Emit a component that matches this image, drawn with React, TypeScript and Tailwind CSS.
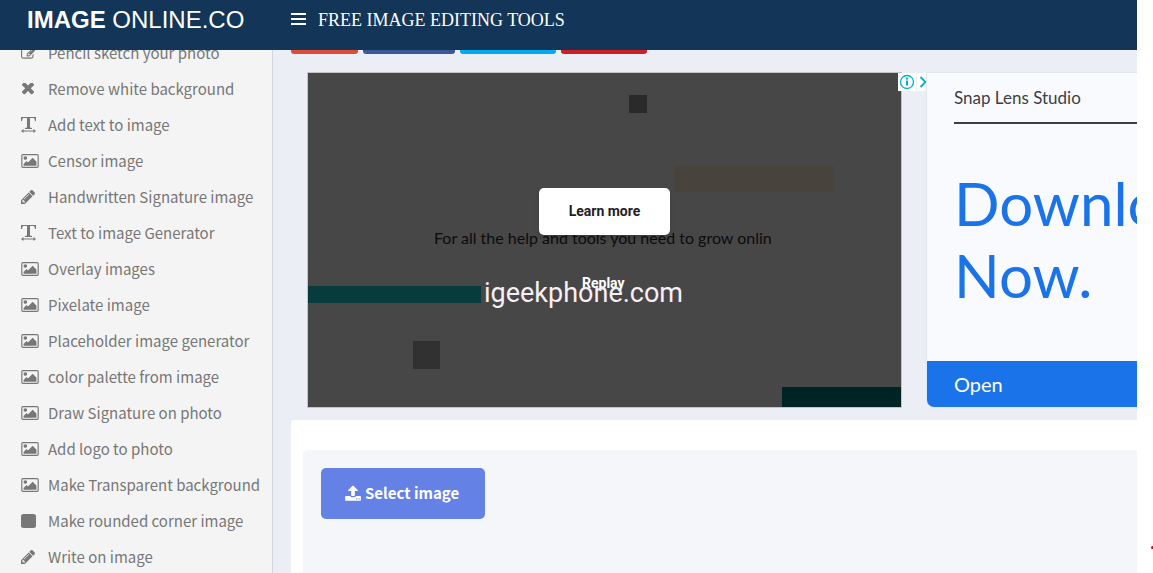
import type { ReactNode } from "react";

type IconName = "edit" | "times" | "text" | "picture" | "pencil" | "square";

const tools: { label: string; icon: IconName }[] = [
  { label: "Pencil sketch your photo", icon: "edit" },
  { label: "Remove white background", icon: "times" },
  { label: "Add text to image", icon: "text" },
  { label: "Censor image", icon: "picture" },
  { label: "Handwritten Signature image", icon: "pencil" },
  { label: "Text to image Generator", icon: "text" },
  { label: "Overlay images", icon: "picture" },
  { label: "Pixelate image", icon: "picture" },
  { label: "Placeholder image generator", icon: "picture" },
  { label: "color palette from image", icon: "picture" },
  { label: "Draw Signature on photo", icon: "picture" },
  { label: "Add logo to photo", icon: "picture" },
  { label: "Make Transparent background", icon: "picture" },
  { label: "Make rounded corner image", icon: "square" },
  { label: "Write on image", icon: "pencil" },
];

const icons: Record<IconName, ReactNode> = {
  edit: (
    <svg viewBox="0 0 1792 1792" className="h-4 w-4" fill="currentColor">
      <path d="M888 1184l116-116-152-152-116 116v56h96v96h56zm440-720q-16-16-33 1l-350 350q-17 17-1 33t33-1l350-350q17-17 1-33zm80 594v190q0 119-84.5 203.5t-203.5 84.5h-832q-119 0-203.5-84.5t-84.5-203.5v-832q0-119 84.5-203.5t203.5-84.5h832q63 0 117 25 15 7 18 23 3 17-9 29l-49 49q-14 14-32 8-23-6-45-6h-832q-66 0-113 47t-47 113v832q0 66 47 113t113 47h832q66 0 113-47t47-113v-126q0-13 9-22l64-64q15-15 35-7t20 29zm-96-738l288 288-672 672h-288v-288zm444 132l-92 92-288-288 92-92q28-28 68-28t68 28l152 152q28 28 28 68t-28 68z" />
    </svg>
  ),
  times: (
    <svg viewBox="203 430 1287 1188" className="h-3 w-[13px]" fill="currentColor">
      <path d="M1490 1322q0 40-28 68l-136 136q-28 28-68 28t-68-28l-294-294-294 294q-28 28-68 28t-68-28l-136-136q-28-28-28-68t28-68l294-294-294-294q-28-28-28-68t28-68l136-136q28-28 68-28t68 28l294 294 294-294q28-28 68-28t68 28l136 136q28 28 28 68t-28 68l-294 294 294 294q28 28 28 68z" />
    </svg>
  ),
  text: (
    <svg viewBox="0 0 16 16" className="h-4 w-4" fill="currentColor">
      <path d="M0 0h15v4h-1l-.6-2.6-.6-.4H9v9.6l2 .5v.9H4v-.9l2-.5V1H2.2l-.6.4L1 4H0zM2.5 12v1.5h10V12l2.5 2-2.5 2v-1.5h-10V16L0 14z" />
    </svg>
  ),
  picture: (
    <svg viewBox="-64 128 1920 1536" className="h-[14px] w-[18px]" fill="currentColor">
      <path d="M576 576q0 80-56 136t-136 56-136-56-56-136 56-136 136-56 136 56 56 136zm1024 384v448h-1408v-192l320-320 160 160 512-512zm96-704h-1600q-13 0-22.5 9.5t-9.5 22.5v1216q0 13 9.5 22.5t22.5 9.5h1600q13 0 22.5-9.5t9.5-22.5v-1216q0-13-9.5-22.5t-22.5-9.5zm160 32v1216q0 66-47 113t-113 47h-1600q-66 0-113-47t-47-113v-1216q0-66 47-113t113-47h1600q66 0 113 47t47 113z" />
    </svg>
  ),
  pencil: (
    <svg viewBox="128 149 1515 1515" className="h-[14px] w-[14px]" fill="currentColor">
      <path d="M491 1536l91-91-235-235-91 91v107h128v128h107zm523-928q0-22-22-22-10 0-17 7l-542 542q-7 7-7 17 0 22 22 22 10 0 17-7l542-542q7-7 7-17zm-54-192l416 416-832 832h-416v-416zm683 96q0 53-37 90l-166 166-416-416 166-165q36-38 90-38 53 0 91 38l235 234q37 39 37 91z" />
    </svg>
  ),
  square: (
    <svg viewBox="0 0 15 14" className="h-[14px] w-[15px]" fill="currentColor">
      <rect width="15" height="14" rx="2.5" />
    </svg>
  ),
};

function Header() {
  return (
    <header className="z-10 flex h-[50px] shrink-0 bg-[#133557] text-white">
      <a
        href="#"
        className="w-[273px] shrink-0 pl-[27px] font-['Liberation_Sans',sans-serif] text-2xl leading-10 whitespace-nowrap"
      >
        <b>IMAGE</b> ONLINE.CO
      </a>
      <div className="flex h-10 items-center gap-3 pl-[18px]">
        <button type="button" aria-label="Toggle navigation" className="-mt-0.5">
          <svg viewBox="0 0 15 12" className="block h-3 w-[15px]" fill="currentColor">
            <path d="M0 0h15v2H0zM0 5h15v2H0zM0 10h15v2H0z" />
          </svg>
        </button>
        <h1 className="font-['Liberation_Serif',serif] text-lg whitespace-nowrap">
          FREE IMAGE EDITING TOOLS
        </h1>
      </div>
    </header>
  );
}

function Sidebar() {
  return (
    <aside className="w-[273px] shrink-0 overflow-hidden border-r border-[#d2d6de] bg-[#f4f4f4]">
      <nav className="-mt-[15px]">
        <ul>
          {tools.map((tool) => (
            <li key={tool.label}>
              <a
                href="#"
                className="flex h-9 items-center pl-[21px] font-['Noto_Sans_CJK_SC',sans-serif] text-[15px] whitespace-nowrap text-[#777]"
              >
                <span className="w-[27px] shrink-0">{icons[tool.icon]}</span>
                {tool.label}
              </a>
            </li>
          ))}
        </ul>
      </nav>
    </aside>
  );
}

function ShareBar() {
  return (
    <div className="flex h-1 gap-[5px]">
      <a href="#" aria-label="Google" className="w-[67px] rounded-b-[3px] bg-[#dd4b39]" />
      <a href="#" aria-label="Facebook" className="w-[92px] rounded-b-[3px] bg-[#3b5998]" />
      <a href="#" aria-label="Twitter" className="w-[96px] rounded-b-[3px] bg-[#00aced]" />
      <a href="#" aria-label="Pinterest" className="w-[86px] rounded-b-[3px] bg-[#cb2027]" />
    </div>
  );
}

function VideoAd() {
  return (
    <section className="relative h-[336px] w-[595px] shrink-0 border border-[#c4c4c4] bg-[#474747]">
      <div className="absolute top-[22px] left-[321px] h-[18px] w-[18px] bg-[#2a2a2a]" />
      <div className="absolute top-[93px] left-[366px] h-[26px] w-[160px] bg-[#48433d]" />
      <div className="absolute top-[213px] left-0 h-[17px] w-[173px] bg-[#083c3c]" />
      <div className="absolute top-[268px] left-[105px] h-[28px] w-[27px] bg-[#313131]" />
      <div className="absolute right-0 bottom-0 h-[20px] w-[119px] bg-[#002423]" />
      <p className="absolute top-[155px] left-[126px] font-['Lato',sans-serif] text-base leading-5 whitespace-nowrap text-[#0c0c0c]">
        For all the help and tools you need to grow onlin
      </p>
      <button
        type="button"
        className="absolute top-[115px] left-[231px] h-[47px] w-[131px] rounded-[5px] bg-white pb-0.5 font-['Roboto',sans-serif] text-sm font-bold text-[#222] shadow-md"
      >
        Learn more
      </button>
      <button
        type="button"
        className="absolute top-[200px] left-[274px] font-['Roboto',sans-serif] text-sm font-bold text-white"
      >
        Replay
      </button>
      <span className="absolute top-[204px] left-[176px] font-['Roboto',sans-serif] text-[27px] leading-8 whitespace-nowrap text-[#f7eef7]">
        igeekphone.com
      </span>
      <div className="absolute top-0 -right-[25px] flex h-[18px] gap-px">
        <button type="button" aria-label="Ad info" className="w-[18px] bg-white">
          <svg viewBox="0 0 18 18" className="h-[18px] w-[18px]" fill="none" stroke="#00aecd">
            <circle cx="9" cy="9" r="6.5" strokeWidth="1.3" />
            <path d="M9 7.6v5M9 4.6v1.8" strokeWidth="2" />
          </svg>
        </button>
        <button type="button" aria-label="Close ad" className="w-[9px] bg-white">
          <svg viewBox="0 0 9 18" className="h-[18px] w-[9px]" fill="none" stroke="#00aecd">
            <path d="M3.5 4l5 5-5 5" strokeWidth="1.8" />
          </svg>
        </button>
      </div>
    </section>
  );
}

function StudioAd() {
  return (
    <section className="flex min-w-0 flex-1 flex-col overflow-hidden rounded-bl-lg border border-r-0 border-[#e4e6ea] bg-[#f9fafd] font-['Lato',sans-serif] whitespace-nowrap">
      <div className="flex-1 pl-[27px]">
        <h2 className="border-b-2 border-[#3c4043] pt-[14px] pb-[13px] text-[17px] leading-[22px] text-[#3c4043]">
          Snap Lens Studio
        </h2>
        <p className="pt-[43px] text-[60px] leading-[72px] text-[#1a73e8]">
          Download
          <br />
          Now.
        </p>
      </div>
      <a href="#" className="h-[46px] bg-[#1a73e8] pl-[27px] text-xl leading-[46px] text-white">
        Open
      </a>
    </section>
  );
}

function Editor() {
  return (
    <section className="flex-1 rounded-tl-[3px] bg-white pt-[30px] pl-3">
      <div className="h-full rounded-tl-[5px] bg-[#f4f6fa] p-[18px]">
        <button
          type="button"
          className="flex h-[51px] items-center gap-1 rounded-[5px] bg-[#6481e6] pr-[26px] pl-6 font-['Noto_Sans_CJK_SC',sans-serif] text-[15px] font-bold text-white"
        >
          <svg viewBox="64 0 1664 1792" className="h-[17px] w-4" fill="currentColor">
            <path d="M1344 1472q0-26-19-45t-45-19-45 19-19 45 19 45 45 19 45-19 19-45zm256 0q0-26-19-45t-45-19-45 19-19 45 19 45 45 19 45-19 19-45zm128-224v320q0 40-28 68t-68 28h-1472q-40 0-68-28t-28-68v-320q0-40 28-68t68-28h427q21 56 70.5 92t110.5 36h256q61 0 110.5-36t70.5-92h427q40 0 68 28t28 68zm-325-648q-17 40-59 40h-256v448q0 26-19 45t-45 19h-256q-26 0-45-19t-19-45v-448h-256q-42 0-59-40-17-39 14-69l448-448q18-19 45-19t45 19l448 448q31 30 14 69z" />
          </svg>
          Select image
        </button>
      </div>
    </section>
  );
}

export default function App() {
  return (
    <div className="relative h-screen overflow-hidden bg-white pr-4">
      <div className="flex h-full flex-col overflow-hidden">
        <Header />
        <div className="flex min-h-0 flex-1">
          <Sidebar />
          <main className="flex min-w-0 flex-1 flex-col bg-[#ebeef4] pl-[18px]">
            <ShareBar />
            <div className="flex gap-6 pt-[18px] pb-3 pl-4">
              <VideoAd />
              <StudioAd />
            </div>
            <Editor />
          </main>
        </div>
      </div>
      <span className="absolute right-0 bottom-6 h-[3px] w-[2px] rounded-l-full bg-red-600" />
    </div>
  );
}
